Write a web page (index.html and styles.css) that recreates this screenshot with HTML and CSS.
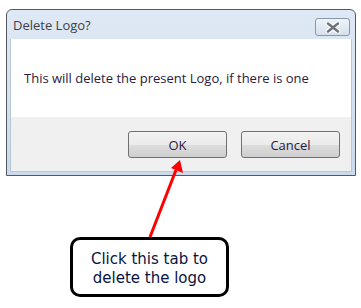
FILE: index.html
```html
<!DOCTYPE html>
<html lang="en">
<head>
    <meta charset="UTF-8">
    <title>Delete Logo?</title>
    <link rel="stylesheet" href="styles.css">
</head>
<body>
    <div class="dialog">
        <div class="titlebar">
            <span class="title">Delete Logo?</span>
            <button class="close" aria-label="Close">
                <svg width="16" height="11" viewBox="0 0 16 11">
                    <path d="M3 1.5 L13 9.5 M13 1.5 L3 9.5" stroke="#ffffff" stroke-width="5" stroke-linecap="round"/>
                    <path d="M3 1.5 L13 9.5 M13 1.5 L3 9.5" stroke="#70747c" stroke-width="2.5" stroke-linecap="round"/>
                </svg>
            </button>
        </div>
        <div class="frame">
            <div class="message">This will delete the present Logo, if there is one</div>
            <div class="actions">
                <button class="btn">OK</button>
                <button class="btn">Cancel</button>
            </div>
        </div>
    </div>

    <div class="callout">Click this tab to<br>delete the logo</div>

    <svg class="arrow" width="361" height="308" viewBox="0 0 361 308">
        <line x1="150" y1="237" x2="176" y2="170" stroke="#ff0000" stroke-width="3"/>
        <polygon points="180,160 183,173 171,168" fill="#ff0000"/>
    </svg>
</body>
</html>
```

FILE: styles.css
```css
body {
    margin: 0;
    background: #ffffff;
    font-family: 'Open Sans', 'DejaVu Sans', sans-serif;
    position: relative;
    width: 361px;
    height: 308px;
    overflow: hidden;
}

.dialog {
    margin: 9px 0 0 6px;
    width: 348px;
    border: 1px solid #55595f;
    border-radius: 6px 6px 0 0;
    background: linear-gradient(#dfe9f5, #cbdaec);
}

.titlebar {
    height: 29px;
    display: flex;
    align-items: center;
    justify-content: space-between;
    padding: 0 5px 0 6px;
}

.title {
    font-size: 13px;
    color: #3b3f48;
}

.close {
    width: 35px;
    height: 18px;
    margin-top: 5px;
    padding: 0;
    display: flex;
    align-items: center;
    justify-content: center;
    border: 1px solid #8a97ab;
    border-radius: 3px;
    background: linear-gradient(#eef3f9, #d6e1ee);
}

.frame {
    margin: 0 3px 3px 3px;
    border: 1px solid #b8c6d8;
    border-top: none;
}

.message {
    background: #ffffff;
    height: 78px;
    padding-left: 13px;
    display: flex;
    align-items: center;
    font-size: 13px;
    color: #2a1a40;
}

.actions {
    background: #f0f0f0;
    height: 54px;
    display: flex;
    justify-content: flex-end;
    align-items: flex-start;
    gap: 14px;
    padding: 14px 11px 0 0;
    box-sizing: border-box;
}

.btn {
    width: 99px;
    height: 27px;
    border: 1px solid #707070;
    border-radius: 3px;
    background: linear-gradient(#f2f2f2 0%, #ebebeb 50%, #dddddd 51%, #cfcfcf 100%);
    font-family: 'Open Sans', 'DejaVu Sans', sans-serif;
    font-size: 13px;
    color: #2a1a40;
    padding: 0;
}

.callout {
    margin: 61px 0 0 70px;
    width: 153px;
    height: 51px;
    padding-top: 3px;
    border: 3px solid #000000;
    border-radius: 10px;
    display: flex;
    align-items: center;
    justify-content: center;
    text-align: center;
    font-family: 'DejaVu Sans', Verdana, sans-serif;
    font-size: 15px;
    line-height: 19px;
    color: #0a1440;
}

.arrow {
    position: absolute;
    left: 0;
    top: 0;
    pointer-events: none;
}
```
